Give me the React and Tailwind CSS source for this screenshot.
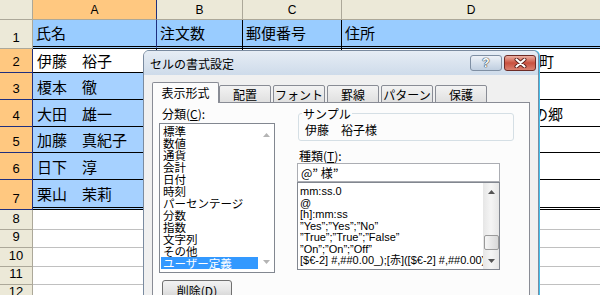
import React from 'react';

const JP = "font-['Noto_Sans_CJK_JP',sans-serif]";
const LAT = "font-['Liberation_Sans','Noto_Sans_CJK_JP',sans-serif]";

// rows 2-7 of the sheet (A2:A7 selected)
const bodyRows = [
    { n: 2, h: 'h-[24px]', a: '伊藤　裕子', aBg: 'bg-white', d: '町', dPad: 'pl-[197px]' },
    { n: 3, h: 'h-[27px]', a: '榎本　徹', aBg: 'bg-[#a6d1ff]' },
    { n: 4, h: 'h-[27px]', a: '大田　雄一', aBg: 'bg-[#a6d1ff]', d: 'の郷', dPad: 'pl-[191px]' },
    { n: 5, h: 'h-[26px]', a: '加藤　真紀子', aBg: 'bg-[#a6d1ff]' },
    { n: 6, h: 'h-[27px]', a: '日下　淳', aBg: 'bg-[#a6d1ff]' },
    { n: 7, h: 'h-[30px]', a: '栗山　茉莉', aBg: 'bg-[#a6d1ff]', last: true },
];

const emptyRows = [
    { n: 8, h: 'h-[20px]' },
    { n: 9, h: 'h-[18px]' },
    { n: 10, h: 'h-[19px]' },
    { n: 11, h: 'h-[18px]' },
    { n: 12, h: 'h-[18px]' },
];

const categories = ['標準', '数値', '通貨', '会計', '日付', '時刻', 'パーセンテージ', '分数', '指数', '文字列', 'その他', 'ユーザー定義'];

const formats = [
    'mm:ss.0',
    '@',
    '[h]:mm:ss',
    '”Yes”;”Yes”;”No”',
    '”True”;”True”;”False”',
    '”On”;”On”;”Off”',
    '[$€-2] #,##0.00_);[赤]([$€-2] #,##0.00)',
];

const tabs = ['配置', 'フォント', '罫線', 'パターン', '保護'];

const RowHead = ({ n, selected }) => (
    <div
        className={`w-[33px] shrink-0 flex items-end justify-center pb-[3px] text-[13px] leading-[14px] ${LAT} border-r border-b ${
            selected ? 'bg-[#ffc880] border-[#1f2f7f]' : 'bg-[#ece9d8] border-[#aca899]'
        }`}
    >
        {n}
    </div>
);

const Arrow = ({ up, color }) => (
    <svg width="7" height="4" viewBox="0 0 7 4">
        <path d={up ? 'M0 4 L3.5 0 L7 4 Z' : 'M0 0 L7 0 L3.5 4 Z'} fill={color} />
    </svg>
);

const Sheet = () => (
    <div className={`flex flex-col text-[15px] text-black ${JP}`}>
        {/* column headers */}
        <div className={`flex h-[20px] text-[12px] ${LAT}`}>
            <div className="w-[33px] shrink-0 bg-[#ece9d8] border-r border-b border-[#aca899]"></div>
            <div className="w-[124px] shrink-0 flex items-center justify-center bg-[#ffc880] border-r border-r-[#1f2f7f] border-b border-b-[#aca899]">A</div>
            <div className="w-[86px] shrink-0 flex items-center justify-center bg-[#ece9d8] border-r border-b border-[#aca899]">B</div>
            <div className="w-[99px] shrink-0 flex items-center justify-center bg-[#ece9d8] border-r border-b border-[#aca899]">C</div>
            <div className="flex-1 flex items-center justify-center bg-[#ece9d8] border-b border-[#aca899]">D</div>
        </div>

        {/* row 1: headings */}
        <div className="flex h-[29px]">
            <RowHead n={1} />
            <div className="w-[124px] shrink-0 flex items-center pl-[3px] bg-[#99ccff] border-r border-r-[#1f2f7f] border-b-[3px] border-double border-b-black">氏名</div>
            <div className="w-[86px] shrink-0 flex items-center pl-[3px] bg-[#99ccff] border-r border-r-black border-b-[3px] border-double border-b-black">注文数</div>
            <div className="w-[99px] shrink-0 flex items-center pl-[3px] bg-[#99ccff] border-r border-r-black border-b-[3px] border-double border-b-black">郵便番号</div>
            <div className="flex-1 flex items-center pl-[3px] bg-[#99ccff] border-b-[3px] border-double border-b-black">住所</div>
        </div>

        {/* rows 2-7 */}
        {bodyRows.map(row => {
            const bb = row.last ? 'border-b-[3px] border-double border-b-black' : 'border-b border-b-black';
            return (
                <div key={row.n} className={`flex ${row.h}`}>
                    <RowHead n={row.n} selected />
                    <div className={`w-[124px] shrink-0 flex items-center pl-[4px] pt-[2px] whitespace-nowrap ${row.aBg} border-r border-r-black ${bb}`}>{row.a}</div>
                    <div className={`w-[86px] shrink-0 bg-white border-r border-r-black ${bb}`}></div>
                    <div className={`w-[99px] shrink-0 bg-white border-r border-r-black ${bb}`}></div>
                    <div className={`flex-1 flex items-center pt-[2px] whitespace-nowrap bg-white ${row.dPad || ''} ${bb}`}>{row.d}</div>
                </div>
            );
        })}

        {/* rows 8+ */}
        {emptyRows.map(row => (
            <div key={row.n} className={`flex ${row.h}`}>
                <RowHead n={row.n} />
                <div className="w-[124px] shrink-0 border-r border-b border-[#c0c0c0]"></div>
                <div className="w-[86px] shrink-0 border-r border-b border-[#c0c0c0]"></div>
                <div className="w-[99px] shrink-0 border-r border-b border-[#c0c0c0]"></div>
                <div className="flex-1 border-b border-[#c0c0c0]"></div>
            </div>
        ))}
    </div>
);

const FormatDialog = () => (
    <div className={`absolute left-[143px] top-[50px] w-[396px] h-[260px] flex flex-col rounded-t-[6px] border border-[#7a8ba0] bg-[#f0f0f0] shadow-[1px_0_0_#41c1ef] text-[12px] leading-[13px] text-black ${JP}`}>
        {/* Title bar */}
        <div className="h-[24px] shrink-0 flex items-start rounded-t-[5px] bg-linear-to-b from-[#e6edf5] to-[#cedbea]">
            <span className="pl-[6px] pt-[6px]">セルの書式設定</span>
            <div className="ml-auto mr-[2px] mt-[4px] flex gap-[2px]">
                <div className="w-[32px] h-[16px] flex items-center justify-center rounded-[3px] border border-[#7f8fa3] bg-linear-to-b from-[#eef2f7] via-[#d6e0ec] to-[#c0cfe0]">
                    <span className={`text-[12px] leading-[12px] font-bold text-white ${LAT} [text-shadow:0_0_1px_#2b3a4a,0_0_1px_#2b3a4a,0_0_1px_#2b3a4a]`}>?</span>
                </div>
                <div className="w-[32px] h-[16px] flex items-center justify-center rounded-[3px] border border-[#6d2b26] bg-linear-to-b from-[#eab0a4] via-[#c9503f] to-[#d98070]">
                    <svg width="13" height="10" viewBox="0 0 13 10">
                        <path d="M2.5 1.5 L10.5 8.5 M10.5 1.5 L2.5 8.5" stroke="#5a1f1a" strokeWidth="4" strokeLinecap="round" />
                        <path d="M2.5 1.5 L10.5 8.5 M10.5 1.5 L2.5 8.5" stroke="#ffffff" strokeWidth="2.2" strokeLinecap="round" />
                    </svg>
                </div>
            </div>
        </div>

        {/* Body */}
        <div className="flex-1 flex flex-col px-[8px] pt-[7px]">
            {/* Tabs */}
            <div className="relative z-10 flex items-end h-[21px] -mb-px">
                <div className="w-[67px] h-[21px] flex items-center justify-center pb-[1px] bg-[#fcfcfc] border-x border-t border-[#898c95] rounded-t-[2px]">表示形式</div>
                {tabs.map((t, i) => (
                    <div
                        key={t}
                        className={`w-[52px] h-[18px] flex items-center justify-center bg-linear-to-b from-[#f3f3f3] to-[#e0e0e0] border border-[#898c95] rounded-t-[2px] ${i === 0 ? '' : 'ml-[2px]'}`}
                    >
                        {t}
                    </div>
                ))}
            </div>

            {/* Tab panel */}
            <div className="flex-1 flex border border-[#898c95] bg-[#fcfcfc] pl-[6px] pt-[4px]">
                {/* Category column */}
                <div className="w-[116px] shrink-0 flex flex-col">
                    <div className="pl-[3px]">
                        分類(<span className="underline">C</span>):
                    </div>
                    <div className="mt-[3px] h-[150px] flex border border-[#828790] bg-white">
                        <div className="w-[97px] ml-[1px] pt-[1px] flex flex-col text-[11.5px]">
                            {categories.map(c => (
                                <div
                                    key={c}
                                    className={`h-[12px] leading-[12px] pl-[2px] whitespace-nowrap ${c === 'ユーザー定義' ? 'bg-[#3399ff] text-white' : ''}`}
                                >
                                    {c}
                                </div>
                            ))}
                        </div>
                        <div className="flex-1 flex flex-col items-center justify-between pt-[9px] pb-[8px]">
                            <Arrow up color="#b4b4b4" />
                            <Arrow color="#b4b4b4" />
                        </div>
                    </div>
                    <div className="mt-[7px] ml-[3px] w-[70px] h-[20px] flex items-center justify-center rounded-[3px] border border-[#707070] bg-linear-to-b from-[#f2f2f2] via-[#e6e6e6] to-[#d0d0d0]">
                        削除(<span className="underline">D</span>)
                    </div>
                </div>

                {/* Sample / type column */}
                <div className="w-[217px] ml-[22px] shrink-0 flex flex-col">
                    <fieldset className="ml-[1px] w-[216px] border border-[#d5dfe5] rounded-[3px]">
                        <legend className="ml-[3px] px-[1px]">サンプル</legend>
                        <div className="h-[20px] pl-[6px] pt-[3px] leading-[14px]">伊藤　裕子様</div>
                    </fieldset>

                    <div className="mt-[8px] pl-[2px]">
                        種類(<span className="underline">T</span>):
                    </div>
                    <div className="mt-[1px] w-[203px] h-[19px] flex items-center pl-[3px] border border-[#abadb3] bg-white">@” 様”</div>
                    <div className="w-[203px] h-[88px] flex border border-[#828790] bg-white">
                        <div className={`flex-1 min-w-0 overflow-hidden pl-[2px] pt-[3px] text-[11px] ${LAT}`}>
                            {formats.map(f => (
                                <div key={f} className="h-[11.5px] leading-[11.5px] whitespace-nowrap">{f}</div>
                            ))}
                        </div>
                        <div className="w-[16px] shrink-0 flex flex-col bg-linear-to-r from-[#e6e6e6] via-[#f5f5f5] to-[#e6e6e6]">
                            <div className="h-[17px] flex items-center justify-center"><Arrow up color="#555555" /></div>
                            <div className="mt-[35px] mx-auto w-[15px] h-[15px] rounded-[2px] border border-[#9a9a9a] bg-linear-to-r from-[#f6f6f6] to-[#d8d8d8]"></div>
                            <div className="flex-1"></div>
                            <div className="h-[17px] flex items-center justify-center"><Arrow color="#555555" /></div>
                        </div>
                    </div>
                </div>
            </div>
        </div>
    </div>
);

const App = () => {
    return (
        <div className="relative w-[600px] h-[295px] overflow-hidden bg-white">
            <Sheet />
            <FormatDialog />
        </div>
    );
};

export default App;
